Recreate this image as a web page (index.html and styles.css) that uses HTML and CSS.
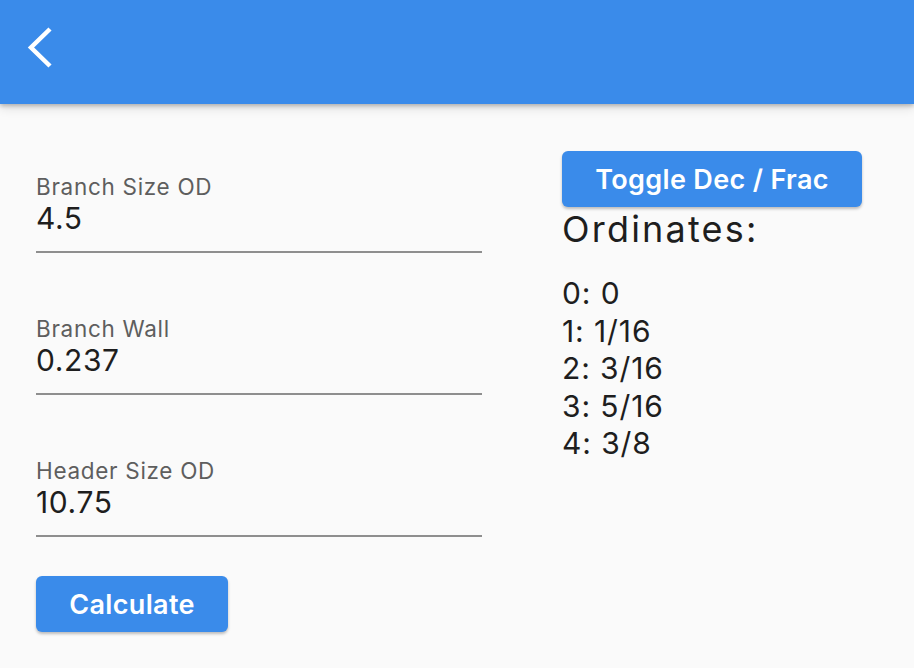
FILE: index.html
```html
<!DOCTYPE html>
<html>
<head>
<meta charset="utf-8">
<link rel="stylesheet" href="styles.css">
</head>
<body>
<header class="appbar">
  <button class="back" aria-label="Back">
    <svg width="30" height="44" viewBox="0 0 30 44"><path d="M24 3 L5 21.5 L24 40" fill="none" stroke="#fff" stroke-width="4.5" stroke-linecap="butt" stroke-linejoin="miter"/></svg>
  </button>
</header>
<main class="content">
  <section class="form">
    <div class="field">
      <div class="label">Branch Size OD</div>
      <div class="value">4.5</div>
    </div>
    <div class="field">
      <div class="label">Branch Wall</div>
      <div class="value">0.237</div>
    </div>
    <div class="field">
      <div class="label">Header Size OD</div>
      <div class="value">10.75</div>
    </div>
    <button class="btn calc">Calculate</button>
  </section>
  <section class="results">
    <button class="btn toggle">Toggle Dec / Frac</button>
    <h2 class="title">Ordinates:</h2>
    <ul class="list">
      <li>0: 0</li>
      <li>1: 1/16</li>
      <li>2: 3/16</li>
      <li>3: 5/16</li>
      <li>4: 3/8</li>
    </ul>
  </section>
</main>
</body>
</html>
```
FILE: styles.css
```css
* { box-sizing: border-box; }
html, body { margin: 0; padding: 0; }
body {
  width: 914px;
  height: 668px;
  overflow: hidden;
  background: #fafafa;
  font-family: Inter, "Noto Sans", sans-serif;
  color: #212121;
}
.appbar {
  height: 104px;
  background: #3a8bea;
  box-shadow: 0 2px 4px rgba(0,0,0,0.22), 0 4px 10px rgba(0,0,0,0.12);
  display: flex;
  align-items: flex-start;
  padding: 26px 0 0 26px;
  position: relative;
  z-index: 1;
}
.back {
  background: none;
  border: 0;
  padding: 0;
  display: block;
  cursor: pointer;
}
.back svg { display: block; }
.content {
  display: flex;
  padding: 47px 36px 0 36px;
}
.form {
  width: 446px;
  padding-top: 22px;
  display: flex;
  flex-direction: column;
  align-items: flex-start;
}
.field {
  width: 100%;
  border-bottom: 2px solid #8e8e8e;
  padding-bottom: 14px;
  margin-bottom: 62px;
}
.field:nth-of-type(3) { margin-bottom: 39px; }
.label {
  font-size: 22.5px;
  line-height: 27px;
  letter-spacing: 0.7px;
  color: #5e5e5e;
}
.value {
  font-size: 30px;
  line-height: 37px;
  letter-spacing: 0.6px;
  color: #1e1e1e;
}
.btn {
  background: #3a8bea;
  color: #fff;
  border: 0;
  border-radius: 6px;
  font-family: Inter, "Noto Sans", sans-serif;
  font-weight: 600;
  font-size: 27px;
  letter-spacing: 0.35px;
  height: 56px;
  box-shadow: 0 2px 3px rgba(0,0,0,0.25);
  cursor: pointer;
}
.calc { width: 192px; }
.results {
  margin-left: 80px;
  display: flex;
  flex-direction: column;
  align-items: flex-start;
}
.toggle { width: 300px; }
.title {
  margin: 0;
  font-weight: 400;
  font-size: 36px;
  line-height: 45px;
  letter-spacing: 2.2px;
  color: #1e1e1e;
}
.list {
  list-style: none;
  margin: 23px 0 0 0;
  padding: 0;
  font-size: 30px;
  line-height: 37.5px;
  letter-spacing: 0.9px;
  color: #1e1e1e;
}
```
